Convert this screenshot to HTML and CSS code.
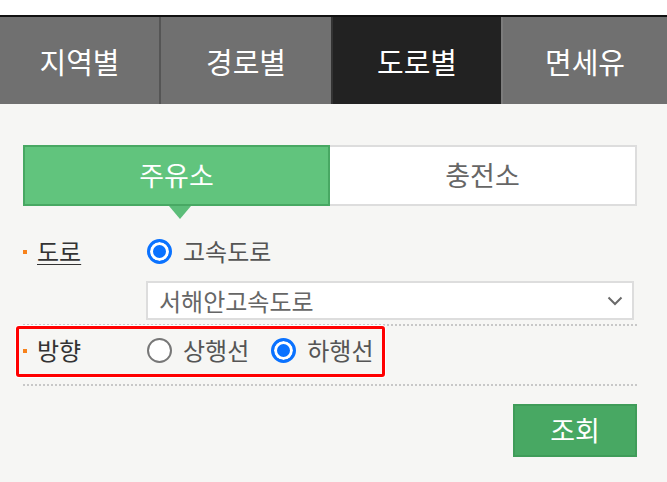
FILE: index.html
```html
<!DOCTYPE html>
<html lang="ko">
<head>
<meta charset="utf-8">
<link rel="stylesheet" href="styles.css">
</head>
<body>
<div class="top-strip"></div>
<nav class="tabs">
  <div class="tab">지역별</div>
  <div class="tab">경로별</div>
  <div class="tab active">도로별</div>
  <div class="tab">면세유</div>
</nav>
<main class="panel">
  <div class="subtabs">
    <div class="subtab on">주유소<span class="arrow"></span></div>
    <div class="subtab">충전소</div>
  </div>
  <div class="form">
    <div class="block">
      <div class="row">
        <div class="label"><span class="dot"></span><span class="ul">도로</span></div>
        <div class="opts">
          <span class="opt"><span class="radio checked"></span>고속도로</span>
        </div>
      </div>
      <div class="select-row">
        <div class="select">
          <span>서해안고속도로</span>
          <svg class="chev" width="16" height="10" viewBox="0 0 16 10"><polyline points="1.5,1.5 8,8 14.5,1.5" fill="none" stroke="#6a6a6a" stroke-width="2"/></svg>
        </div>
      </div>
    </div>
    <div class="block dir">
      <div class="row">
        <div class="label"><span class="dot"></span>방향</div>
        <div class="opts">
          <span class="opt"><span class="radio"></span>상행선</span>
          <span class="opt"><span class="radio checked"></span>하행선</span>
        </div>
      </div>
      <div class="highlight"></div>
    </div>
    <div class="actions">
      <button class="btn">조회</button>
    </div>
  </div>
</main>
</body>
</html>
```

FILE: styles.css
```css
* { box-sizing: border-box; }
html, body { margin: 0; padding: 0; }
body {
  width: 667px;
  height: 482px;
  background: #f6f6f4;
  font-family: "Noto Sans CJK KR", "Noto Sans", sans-serif;
  overflow: hidden;
}
.top-strip { height: 15px; background: #fff; }
.tabs {
  display: grid;
  grid-template-columns: 159px 172px 170px 1fr;
  height: 89px;
  border-top: 2px solid #111;
  background: #707070;
}
.tab {
  display: flex;
  align-items: center;
  justify-content: center;
  color: #fff;
  font-size: 29px;
  line-height: 1;
  padding-top: 1px;
}
.tab + .tab { border-left: 2px solid #555; }
.tab.active { background: #222; border-left-color: #333; }
.tab.active + .tab { border-left-color: #7c7c7c; }

.panel { padding: 41px 30px 0 23px; }
.subtabs {
  display: grid;
  grid-template-columns: 1fr 1fr;
  height: 61px;
}
.subtab {
  position: relative;
  display: flex;
  align-items: center;
  justify-content: center;
  font-size: 27px;
  line-height: 1;
  color: #666;
  background: #fff;
  border: 2px solid #ddd;
  border-left: none;
  padding-bottom: 2px;
}
.subtab.on {
  background: #61c47d;
  border: 2px solid #48a863;
  color: #fff;
}
.arrow {
  position: absolute;
  left: 144px;
  top: 59px;
  width: 0;
  height: 0;
  border-left: 11px solid transparent;
  border-right: 11px solid transparent;
  border-top: 13px solid #5cbd79;
}

.form { padding-top: 30px; }
.block { border-bottom: 2px dotted #c8c8c8; position: relative; }
.block:first-child { padding-bottom: 4px; }
.row {
  display: flex;
  align-items: center;
  height: 30px;
}
.label {
  width: 124px;
  display: flex;
  align-items: center;
  font-size: 24px;
  line-height: 1;
  color: #333;
}
.dot {
  width: 4px;
  height: 4px;
  background: #f7821b;
  margin-right: 10px;
  margin-top: 2px;
}
.ul { text-decoration: underline; text-underline-offset: 3px; text-decoration-thickness: 1px; }
.opts { display: flex; align-items: center; gap: 10px; }
.opt {
  display: flex;
  align-items: center;
  font-size: 24px;
  line-height: 1;
  color: #555;
  margin-right: 12px;
}
.radio {
  width: 25px;
  height: 25px;
  border-radius: 50%;
  border: 2px solid #777;
  background: #fff;
  margin-right: 11px;
}
.radio.checked {
  border: 3px solid #0a72ff;
  background: #0a72ff;
  box-shadow: inset 0 0 0 3px #fff;
}
.select-row { padding: 15px 3px 0 123px; }
.select {
  height: 39px;
  background: #fff;
  border: 2px solid #ddd;
  display: flex;
  align-items: center;
  justify-content: space-between;
  padding: 0 9px 0 11px;
  font-size: 24px;
  line-height: 1;
  color: #666;
}
.chev { margin-top: 1px; }
.dir { padding: 9px 0 19px; }
.highlight {
  position: absolute;
  left: -7px;
  top: 0px;
  width: 369px;
  height: 51px;
  border: 3px solid #f00;
  border-radius: 3px;
  box-shadow: 0 0 0 1px #fff;
}
.actions { display: flex; justify-content: flex-end; padding-top: 18px; }
.btn {
  width: 124px;
  height: 53px;
  background: #48a863;
  border: 2px solid #3f9c59;
  color: #fff;
  font-family: inherit;
  font-size: 27px;
  line-height: 1;
  padding: 0 0 2px;
}
```
